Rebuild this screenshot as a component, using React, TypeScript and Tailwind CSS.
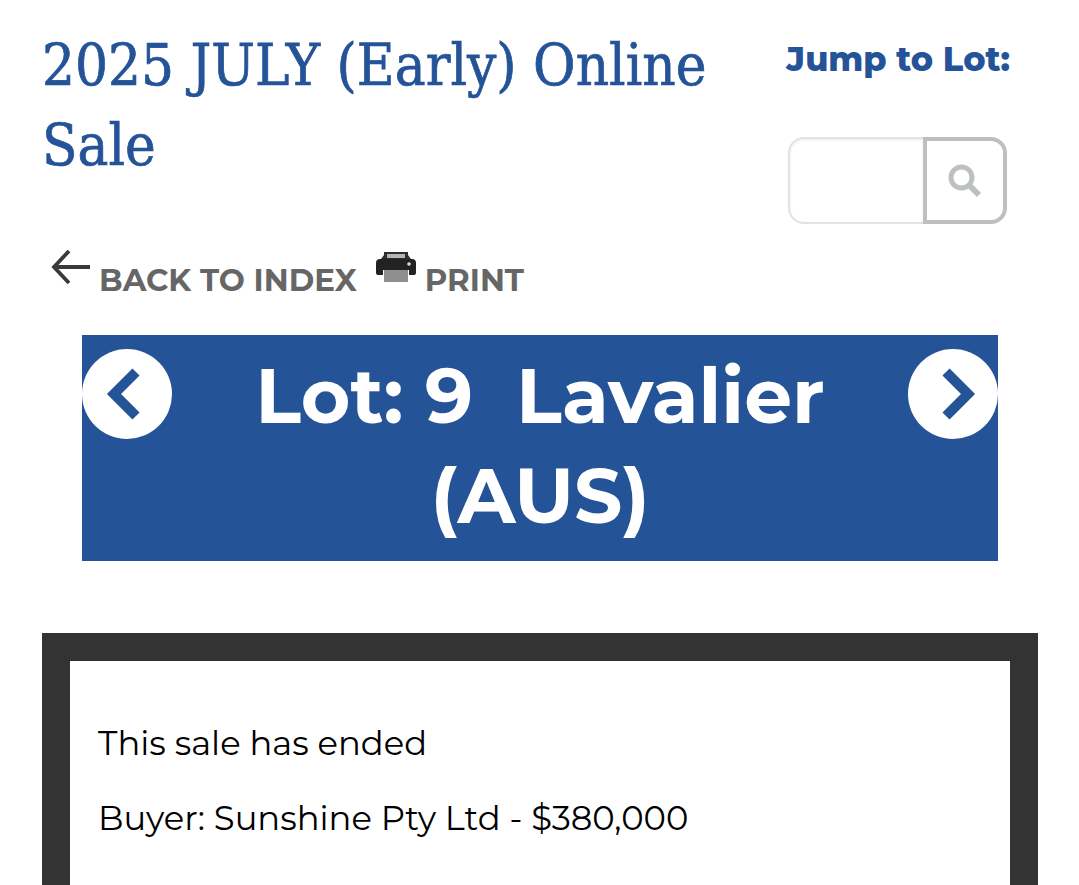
function Printer() {
  return (
    <svg viewBox="0 0 40 32" className="h-[32px] w-[40px]" aria-hidden>
      <path d="M8 1h24v3l3 4H5l3-4z" fill="#2e2e2e" />
      <path d="M11 3h18v4H11z" fill="#b5b5b5" />
      <path d="M4 8h32a4 4 0 0 1 4 4v10a2 2 0 0 1-2 2h-5v-5H7v5H2a2 2 0 0 1-2-2V12a4 4 0 0 1 4-4z" fill="#222" />
      <path d="M8 19h24v12H8z" fill="#8f8f8f" />
      <circle cx="33" cy="13" r="1.8" fill="#ddd" />
    </svg>
  );
}

function BackArrow() {
  return (
    <svg viewBox="0 0 40 38" className="h-[38px] w-[40px]" aria-hidden>
      <path d="M40 19H5M19 3 4 19l15 16" fill="none" stroke="#3a3a3a" strokeWidth="3.8" />
    </svg>
  );
}

function Magnifier() {
  return (
    <svg viewBox="0 0 34 34" className="h-[34px] w-[34px]" aria-hidden>
      <circle cx="13.5" cy="13.5" r="10.5" fill="none" stroke="#bcc0c0" strokeWidth="5" />
      <path d="M21 21l10 10" fill="none" stroke="#bcc0c0" strokeWidth="6" />
    </svg>
  );
}

function Chevron({ dir }: { dir: 'left' | 'right' }) {
  return (
    <div className="h-[90px] w-[90px] shrink-0 rounded-full bg-white">
      <svg viewBox="0 0 90 90" className="h-[90px] w-[90px]" aria-hidden>
        <path
          d={dir === 'left' ? 'M54 23 32 45l22 22' : 'M38 23l22 22-22 22'}
          fill="none"
          stroke="#255398"
          strokeWidth="10"
        />
      </svg>
    </div>
  );
}

export default function App() {
  return (
    <div className="h-[885px] overflow-hidden bg-white font-['Montserrat','Inter',sans-serif]">
      <div className="flex pl-[42px] pr-[69px] pt-[24px]">
        <h1 className="w-[745px] pt-px font-['DejaVu_Serif_Condensed','Liberation_Serif',serif] text-[57.7px] leading-[80px] text-[#255398] [-webkit-text-stroke:0.7px_#255398]">
          2025 JULY (Early) Online Sale
        </h1>
        <div className="flex-1">
          <p className="whitespace-nowrap pt-[15px] text-[33.5px] font-extrabold leading-[40px] text-[#255398]">Jump to Lot:</p>
          <div className="mt-[58px] ml-[2px] flex h-[87px] w-[219px]">
            <div className="w-[135px] rounded-l-[16px] border-2 border-r-0 border-[#e2e2e2] shadow-[inset_0_1px_3px_rgba(0,0,0,0.08)]" />
            <div className="flex flex-1 items-center justify-center rounded-r-[16px] border-[4px] border-[#bcc0c0]">
              <Magnifier />
            </div>
          </div>
        </div>
      </div>
      <div className="mt-[24px] flex h-[56px] items-start pl-[50px] text-[30.9px] font-bold leading-[40px] text-[#666]">
        <BackArrow />
        <span className="ml-[9px] mt-[12px]">BACK TO INDEX</span>
        <span className="ml-[19px] mt-[3px]"><Printer /></span>
        <span className="ml-[9px] mt-[12px]">PRINT</span>
      </div>
      <div className="mx-[82px] mt-[31px] flex h-[226px] w-[916px] items-start bg-[#255398] pt-[14px]">
        <Chevron dir="left" />
        <div className="-mt-[3px] flex-1 text-center text-[75.8px] font-bold leading-[100px] text-white">
          Lot: 9&nbsp; Lavalier (AUS)
        </div>
        <Chevron dir="right" />
      </div>
      <div className="ml-[42px] mr-[41px] mt-[72px] h-[400px] border-[28px] border-[#333] bg-white px-[28px] pt-[62px] text-[33.8px] leading-[40px] text-black">
        <p>This sale has ended</p>
        <p className="mt-[35px]">Buyer: Sunshine Pty Ltd - $380,000</p>
      </div>
    </div>
  );
}
